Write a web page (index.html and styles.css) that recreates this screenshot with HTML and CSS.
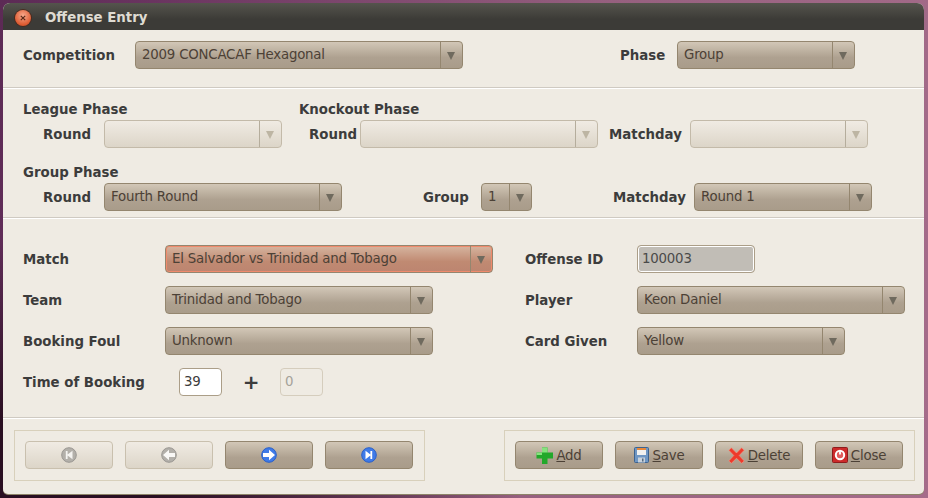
FILE: index.html
```html
<!DOCTYPE html>
<html>
<head>
  <title>Offense Entry</title>
  <meta charset="UTF-8">
  <link rel="stylesheet" href="styles.css">
</head>
<body>
  <div class="window">
    <div class="titlebar">
      <span class="close-dot"><svg width="10" height="10" viewBox="0 0 10 10"><path d="M2.800 2.800l4.400 4.400M7.200 2.800l-4.400 4.400" stroke="#5a2a18" stroke-width="1.200"/></svg></span>
      <span class="title">Offense Entry</span>
    </div>

    <div class="section top">
      <div class="row">
        <label class="lbl competition-lbl">Competition</label>
        <div class="combo w328"><span class="val">2009 CONCACAF Hexagonal</span><span class="arrow"></span></div>
        <label class="lbl phase-lbl">Phase</label>
        <div class="combo w178"><span class="val">Group</span><span class="arrow"></span></div>
      </div>
    </div>

    <div class="section phases">
      <div class="heads">
        <h4 class="lbl league-head">League Phase</h4>
        <h4 class="lbl">Knockout Phase</h4>
      </div>
      <div class="row sub">
        <label class="lbl round-lbl">Round</label>
        <div class="combo w178 off"><span class="val"></span><span class="arrow"></span></div>
        <label class="lbl round-lbl2">Round</label>
        <div class="combo w238 off"><span class="val"></span><span class="arrow"></span></div>
        <label class="lbl matchday-lbl">Matchday</label>
        <div class="combo w178 off"><span class="val"></span><span class="arrow"></span></div>
      </div>
      <h4 class="lbl group-head">Group Phase</h4>
      <div class="row sub-tight">
        <label class="lbl round-lbl">Round</label>
        <div class="combo w238"><span class="val">Fourth Round</span><span class="arrow"></span></div>
        <label class="lbl group-lbl">Group</label>
        <div class="combo w51"><span class="val">1</span><span class="arrow"></span></div>
        <label class="lbl matchday-lbl2">Matchday</label>
        <div class="combo w178"><span class="val">Round 1</span><span class="arrow"></span></div>
      </div>
    </div>

    <div class="section details">
      <label class="lbl">Match</label>
      <div class="combo w328 invalid"><span class="val">El Salvador vs Trinidad and Tobago</span><span class="arrow"></span></div>
      <label class="lbl">Offense ID</label>
      <div class="entry w118 readonly">100003</div>

      <label class="lbl">Team</label>
      <div class="combo w268"><span class="val">Trinidad and Tobago</span><span class="arrow"></span></div>
      <label class="lbl">Player</label>
      <div class="combo w268"><span class="val">Keon Daniel</span><span class="arrow"></span></div>

      <label class="lbl">Booking Foul</label>
      <div class="combo w268"><span class="val">Unknown</span><span class="arrow"></span></div>
      <label class="lbl">Card Given</label>
      <div class="combo w208"><span class="val">Yellow</span><span class="arrow"></span></div>

      <label class="lbl">Time of Booking</label>
      <div class="time-row">
        <div class="entry w43">39</div>
        <span class="plus">+</span>
        <div class="entry w43 off">0</div>
      </div>
    </div>

    <div class="footer">
      <div class="panel">
        <button class="btn off"><svg width="16" height="16" viewBox="0 0 16 16"><circle cx="8" cy="8" r="7.300" fill="#b3b0aa" stroke="#9a9792"/><path d="M4.800 4h1.800v3.400L11.500 3.800v8.400L6.600 8.600V12H4.800z" fill="#f4f3f0"/></svg></button>
        <button class="btn off"><svg width="16" height="16" viewBox="0 0 16 16"><circle cx="8" cy="8" r="7.300" fill="#b3b0aa" stroke="#9a9792"/><path d="M2 8l6-5.200v3.300h6v3.800H8v3.300z" fill="#f9f8f6"/></svg></button>
        <button class="btn"><svg width="16" height="16" viewBox="0 0 16 16"><circle cx="8" cy="8" r="7.300" fill="#3f7be8" stroke="#2a5fc8"/><path d="M14 8L8 2.800v3.300H2v3.800h6v3.300z" fill="#fff"/></svg></button>
        <button class="btn"><svg width="16" height="16" viewBox="0 0 16 16"><circle cx="8" cy="8" r="7.300" fill="#3f7be8" stroke="#2a5fc8"/><path d="M11.200 4H9.400v3.400L4.500 3.800v8.400l4.900-3.600V12h1.800z" fill="#fff"/></svg></button>
      </div>
      <div class="panel">
        <button class="btn"><svg width="17" height="17" viewBox="0 0 17 17"><path d="M6 .5h5.500V5.500H17v6h-5.500V17H6v-5.500H.5v-6H6z" fill="#22a82a"/><path d="M6 .5h5.500V5.500H6zM.5 5.500H6v2.500H.5z" fill="#86e27e"/></svg><span><u>A</u>dd</span></button>
        <button class="btn"><svg width="16" height="16" viewBox="0 0 16 16"><rect x=".5" y=".5" width="14" height="15" rx="1" fill="#6f97c4" stroke="#3d638f"/><rect x="3" y="1" width="9" height="7" fill="#f2f2f0"/><rect x="3" y="1" width="9" height="2" fill="#e8893a"/><rect x="4" y="10.500" width="7" height="5" fill="#c8d2dc"/><rect x="8" y="11.500" width="1.500" height="3" fill="#55697d"/></svg><span><u>S</u>ave</span></button>
        <button class="btn"><svg width="17" height="17" viewBox="0 0 17 17"><path d="M.8 3.200L3.400.8l5.100 5.200L13.600.8l2.600 2.400L11.200 8.500l5 5.400-2.600 2.400-5.100-5.100-5.100 5.100-2.600-2.400 5-5.400z" fill="#ee3a2c" stroke="#f59a88" stroke-width=".6"/></svg><span><u>D</u>elete</span></button>
        <button class="btn"><svg width="16" height="16" viewBox="0 0 16 16"><rect x=".5" y=".5" width="15" height="15" rx="1" fill="#cc2a2a" stroke="#8e1c1c"/><circle cx="8" cy="8" r="4.200" fill="#e05a5a" stroke="#fff" stroke-width="2"/><path d="M8 3.500v4" stroke="#fff" stroke-width="1.800"/></svg><span><u>C</u>lose</span></button>
      </div>
    </div>
  </div>
</body>
</html>
```
FILE: styles.css
```css
* { box-sizing: border-box; }
html, body { margin: 0; height: 100%; }
body { width: 928px; height: 498px; padding: 3px 4px 4px 3px; overflow: hidden; background: radial-gradient(ellipse 520px 260px at 0 100%, #2a0f22 30%, transparent), linear-gradient(100deg, #5c2a55 0%, #6a3460 15%, #96607f 60%, #a56c8a 100%); font-family: "DejaVu Sans", sans-serif; font-size: 13.33px; letter-spacing: -0.2px; color: #3c3c3c; }

.window { width: 921px; height: 491px; background: #efebe3; border-radius: 7px 7px 5px 5px; overflow: hidden; display: flex; flex-direction: column; box-shadow: 0 1px 0 #8d8468; }
.titlebar { height: 27px; flex: none; display: flex; align-items: center; padding: 2px 0 0 12px; background: linear-gradient(#55544d, #3c3b37 60%); color: #dfdbd2; font-weight: bold; letter-spacing: 0; }
.close-dot { width: 16px; height: 16px; border-radius: 50%; background: radial-gradient(circle at 50% 35%, #f7a98c, #dd5a30 70%, #b5431f); box-shadow: 0 0 0 1px #4a2a1e; display: flex; align-items: center; justify-content: center; }
.title { margin-left: 14px; }

.section { padding-left: 20px; border-bottom: 1px solid #cfcac2; box-shadow: 0 1px 0 #fff; }
.row { display: flex; align-items: center; }
.lbl { font-weight: bold; margin: 0; font-size: 13.33px; letter-spacing: 0; white-space: nowrap; }

.top { height: 58px; padding-top: 11px; }
.competition-lbl { width: 112px; }
.phase-lbl { margin-left: 157px; width: 57px; }

.phases { height: 130px; padding-top: 13px; }
.heads { display: flex; height: 16px; align-items: center; }
.league-head { width: 276px; }
.group-head { margin-top: 17px; height: 16px; line-height: 16px; }
.sub { margin-top: 3px; }
.sub-tight { margin-top: 2px; }
.round-lbl { margin-left: 20px; width: 61px; }
.round-lbl2 { margin-left: 27px; width: 51px; }
.matchday-lbl { margin-left: 11px; width: 81px; }
.group-lbl { margin-left: 81px; width: 58px; }
.matchday-lbl2 { margin-left: 81px; width: 81px; }

.details { height: 200px; padding-top: 27px; display: grid; grid-template-columns: 142px 360px 112px 1fr; grid-auto-rows: 28px; row-gap: 13px; align-items: center; }
.time-row { display: flex; align-items: center; padding-left: 14px; }
.plus { width: 58px; text-align: center; font-size: 20px; font-weight: bold; }

.combo { height: 28px; display: flex; border: 1px solid #94866f; border-radius: 4px; background: linear-gradient(#d2c7b7, #aea190 60%, #a99c8a); color: #4c4136; }
.val { flex: 1; padding-left: 6px; line-height: 25px; white-space: nowrap; overflow: hidden; }
.arrow { width: 22px; flex: none; border-left: 1px solid #94866f; position: relative; }
.arrow::after { content: ""; position: absolute; left: 6px; top: 10px; border: 4px solid transparent; border-top: 8px solid #6f6a5e; border-bottom: 0; }
.combo.off { border-color: #c3baa9; background: linear-gradient(#f0ebe3, #dcd5c8); }
.combo.off .arrow { border-left-color: #b5ad9c; }
.combo.off .arrow::after { border-top-color: #bdb5a3; }
.combo.invalid { background: linear-gradient(#d6b5a0, #c08a72 60%, #bc8570); box-shadow: inset 0 0 0 1px #f08a6c; }

.w51 { width: 51px; }
.w43 { width: 43px; }
.w118 { width: 118px; }
.w178 { width: 178px; }
.w208 { width: 208px; }
.w238 { width: 238px; }
.w268 { width: 268px; }
.w328 { width: 328px; }

.entry { height: 28px; line-height: 26px; padding-left: 4px; border: 1px solid #ab9e88; border-radius: 4px; background: #fff; color: #3c3c3c; }
.entry.readonly { background: #c1bdb6; box-shadow: inset 0 0 0 1px #fff; color: #4a4a4a; }
.entry.off { background: #efebe3; border-color: #d5cdbd; color: #a5a29a; }

.footer { flex: 1; display: flex; justify-content: space-between; padding: 12px 9px 0 11px; }
.panel { width: 411px; height: 51px; padding: 10px; border: 1px solid #d8d0bb; display: flex; gap: 12px; }
.btn { width: 88px; height: 28px; padding: 0; display: flex; align-items: center; justify-content: center; gap: 3px; border: 1px solid #94866f; border-radius: 4px; background: linear-gradient(#d2c7b7, #aea190 60%, #a99c8a); color: #4c4136; font-family: inherit; font-size: 13.33px; letter-spacing: -0.2px; }
.btn.off { border-color: #c9c0ae; background: linear-gradient(#f0ebe3, #dcd5c8); }
```
